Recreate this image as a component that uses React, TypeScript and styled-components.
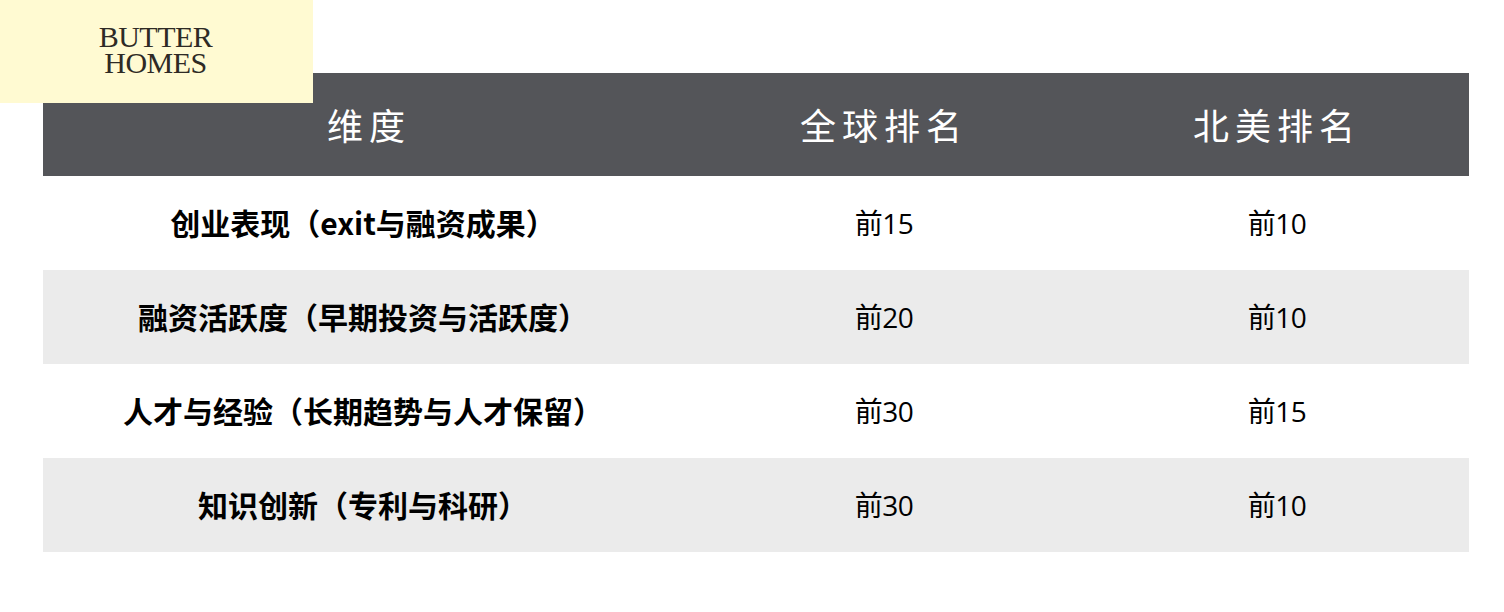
import React from "react";
import styled, { createGlobalStyle } from "styled-components";

const Global = createGlobalStyle`
  html, body { margin: 0; padding: 0; background: #ffffff; }
  body { font-family: "Noto Sans CJK SC", "Noto Sans", sans-serif; }
`;

const Page = styled.div`
  position: relative;
  width: 1504px;
  height: 612px;
  padding: 73px 35px 0 43px;
  box-sizing: border-box;
`;

const Logo = styled.div`
  position: absolute;
  left: 0;
  top: 0;
  width: 313px;
  height: 103px;
  background: #fffad2;
  display: flex;
  flex-direction: column;
  align-items: center;
  justify-content: center;
  padding: 0 2px 4px 0;
  box-sizing: border-box;
  z-index: 2;
`;

const LogoLine = styled.div`
  font-family: "Liberation Serif", "DejaVu Serif", serif;
  font-size: 30px;
  line-height: 26px;
  color: #2e2a25;
  letter-spacing: -0.5px;
`;

const Table = styled.div`
  display: grid;
  grid-template-columns: 640px 390px 396px;
  width: 1426px;
`;

const HeaderCell = styled.div`
  height: 103px;
  background: #545559;
  color: #ffffff;
  display: flex;
  align-items: center;
  justify-content: center;
  font-size: 36px;
  letter-spacing: 6px;
  font-weight: 400;
  padding-left: 12px;
  padding-bottom: 2px;
  box-sizing: border-box;
`;

const Cell = styled.div<{ $shaded: boolean; $bold?: boolean }>`
  height: 94px;
  background: ${(p) => (p.$shaded ? "#ebebeb" : "#ffffff")};
  color: #000000;
  display: flex;
  align-items: center;
  justify-content: center;
  font-size: ${(p) => (p.$bold ? "30px" : "28px")};
  font-weight: ${(p) => (p.$bold ? 700 : 400)};
  font-family: ${(p) =>
    p.$bold
      ? `"Noto Sans CJK SC", sans-serif`
      : `"Open Sans", "Noto Sans CJK SC", sans-serif`};
  letter-spacing: ${(p) => (p.$bold ? "0px" : "-0.5px")};
  padding-left: ${(p) => (p.$bold ? "0px" : "12px")};
  padding-bottom: 2px;
  box-sizing: border-box;
`;

const rows = [
  ["创业表现（exit与融资成果）", "前15", "前10"],
  ["融资活跃度（早期投资与活跃度）", "前20", "前10"],
  ["人才与经验（长期趋势与人才保留）", "前30", "前15"],
  ["知识创新（专利与科研）", "前30", "前10"],
];

export default function App() {
  return (
    <>
      <Global />
      <Page>
        <Logo>
          <LogoLine>BUTTER</LogoLine>
          <LogoLine>HOMES</LogoLine>
        </Logo>
        <Table>
          <HeaderCell>维度</HeaderCell>
          <HeaderCell>全球排名</HeaderCell>
          <HeaderCell>北美排名</HeaderCell>
          {rows.map((r, i) => (
            <React.Fragment key={i}>
              <Cell $shaded={i % 2 === 1} $bold>
                {r[0]}
              </Cell>
              <Cell $shaded={i % 2 === 1}>{r[1]}</Cell>
              <Cell $shaded={i % 2 === 1}>{r[2]}</Cell>
            </React.Fragment>
          ))}
        </Table>
      </Page>
    </>
  );
}
